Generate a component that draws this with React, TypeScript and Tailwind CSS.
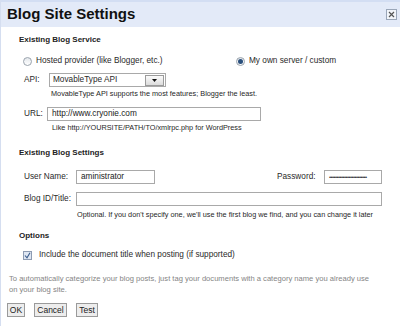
import React from 'react';

const Radio: React.FC<{ checked?: boolean }> = ({ checked }) => (
  <span className="w-[9px] h-[9px] rounded-full border border-[#9aa3ad] bg-gradient-to-b from-[#e4e8ec] to-white flex items-center justify-center shrink-0">
    {checked && <span className="w-[5px] h-[5px] rounded-full bg-[#2a4f7c]" />}
  </span>
);

const Field: React.FC<{ w: string; children?: React.ReactNode }> = ({ w, children }) => (
  <div className={`${w} h-[14px] border border-[#a9a9a9] bg-white flex items-center pl-[4px] text-[8.25px] text-[#222]`}>
    {children}
  </div>
);

export default function App() {
  return (
    <div className="w-[400px] h-[326px] bg-white text-[#2a2a2a] border-l border-[#d5def0] overflow-hidden" style={{ fontFamily: '"Liberation Sans", Arial, sans-serif' }}>
      {/* Title bar */}
      <div className="h-[27px] bg-[#e3eaf8] border-t-2 border-[#d3def3] flex items-center justify-between pl-[6px] pr-[3px]">
        <span className="text-[15px] font-bold text-[#111]">Blog Site Settings</span>
        <span className="w-[11px] h-[11px] border border-[#9aa6b8] bg-[#f2f5fa] flex items-center justify-center">
          <svg width="7" height="7" viewBox="0 0 7 7">
            <path d="M1 1L6 6M6 1L1 6" stroke="#555" strokeWidth="1.2" />
          </svg>
        </span>
      </div>

      <div className="pl-[6px]">
        {/* Existing Blog Service */}
        <div className="mt-[7px] h-[12px] ml-[12px] flex items-center text-[8px] font-bold text-[#222]">Existing Blog Service</div>

        <div className="mt-[9px] h-[12px] flex items-center text-[8.25px]">
          <div className="ml-[16px] flex items-center gap-[4px] w-[213px]">
            <Radio />
            <span>Hosted provider (like Blogger, etc.)</span>
          </div>
          <div className="flex items-center gap-[4px]">
            <Radio checked />
            <span>My own server / custom</span>
          </div>
        </div>

        <div className="mt-[6px] h-[14px] flex items-center text-[8.25px]">
          <span className="ml-[17px] w-[25px]">API:</span>
          <div className="w-[117px] h-[14px] border border-[#a9a9a9] bg-white flex items-center justify-between pl-[3px] pr-[1px]">
            <span>MovableType API</span>
            <span className="w-[19px] h-[11px] border border-[#9b9b9b] bg-gradient-to-b from-[#fbfbfb] to-[#dcdcdc] flex items-center justify-center">
              <svg width="5" height="3" viewBox="0 0 5 3">
                <path d="M0 0H5L2.5 3Z" fill="#111" />
              </svg>
            </span>
          </div>
        </div>
        <div className="mt-[2px] h-[10px] flex items-center ml-[44px] text-[7.3px] text-[#1f1f1f]">
          MovableType API supports the most features; Blogger the least.
        </div>

        <div className="mt-[8px] h-[14px] flex items-center text-[8.25px]">
          <span className="ml-[17px] w-[23px]">URL:</span>
          <Field w="w-[214px]">http://www.cryonie.com</Field>
        </div>
        <div className="mt-[2px] h-[10px] flex items-center ml-[45px] text-[7.3px] text-[#1f1f1f]">
          Like http://YOURSITE/PATH/TO/xmlrpc.php for WordPress
        </div>

        {/* Existing Blog Settings */}
        <div className="mt-[14px] h-[12px] ml-[12px] flex items-center text-[8px] font-bold text-[#222]">Existing Blog Settings</div>

        <div className="mt-[11px] h-[14px] flex items-center text-[8.25px]">
          <span className="ml-[17px] w-[52px]">User Name:</span>
          <Field w="w-[79px]">aministrator</Field>
          <span className="ml-[122px] w-[47px]">Password:</span>
          <Field w="w-[58px]">
            <span className="text-[6px] tracking-[-0.6px] text-[#333]">•••••••••••••••••••••••••</span>
          </Field>
        </div>

        <div className="mt-[8px] h-[14px] flex items-center text-[8.25px]">
          <span className="ml-[17px] w-[52px]">Blog ID/Title:</span>
          <Field w="w-[306px]" />
        </div>
        <div className="mt-[4px] h-[10px] flex items-center ml-[70px] text-[7.3px] text-[#1f1f1f] whitespace-nowrap">
          Optional. If you don't specify one, we'll use the first blog we find, and you can change it later
        </div>

        {/* Options */}
        <div className="mt-[10px] h-[12px] ml-[12px] flex items-center text-[8px] font-bold text-[#222]">Options</div>

        <div className="mt-[7px] h-[12px] flex items-center text-[8.25px]">
          <span className="ml-[16px] w-[9px] h-[9px] border border-[#8e9cb3] bg-[#dfe7f3] flex items-center justify-center">
            <svg width="7" height="7" viewBox="0 0 7 7">
              <path d="M1 3.5L3 5.8L6 0.8" stroke="#3a5c8c" strokeWidth="1.1" fill="none" />
            </svg>
          </span>
          <span className="ml-[7px]">Include the document title when posting (if supported)</span>
        </div>

        <p className="mt-[12px] ml-[2px] text-[7.6px] leading-[11px] text-[#858585] whitespace-nowrap">
          To automatically categorize your blog posts, just tag your documents with a category name you already use
          <br />
          on your blog site.
        </p>

        <div className="mt-[8px] flex items-center gap-[9px] text-[8.5px] text-[#222]">
          <span className="h-[14px] w-[18px] border border-[#9a9a9a] bg-[#ededed] flex items-center justify-center">OK</span>
          <span className="h-[14px] w-[33px] border border-[#9a9a9a] bg-[#ededed] flex items-center justify-center">Cancel</span>
          <span className="h-[14px] w-[22px] border border-[#9a9a9a] bg-[#ededed] flex items-center justify-center">Test</span>
        </div>
      </div>
    </div>
  );
}
